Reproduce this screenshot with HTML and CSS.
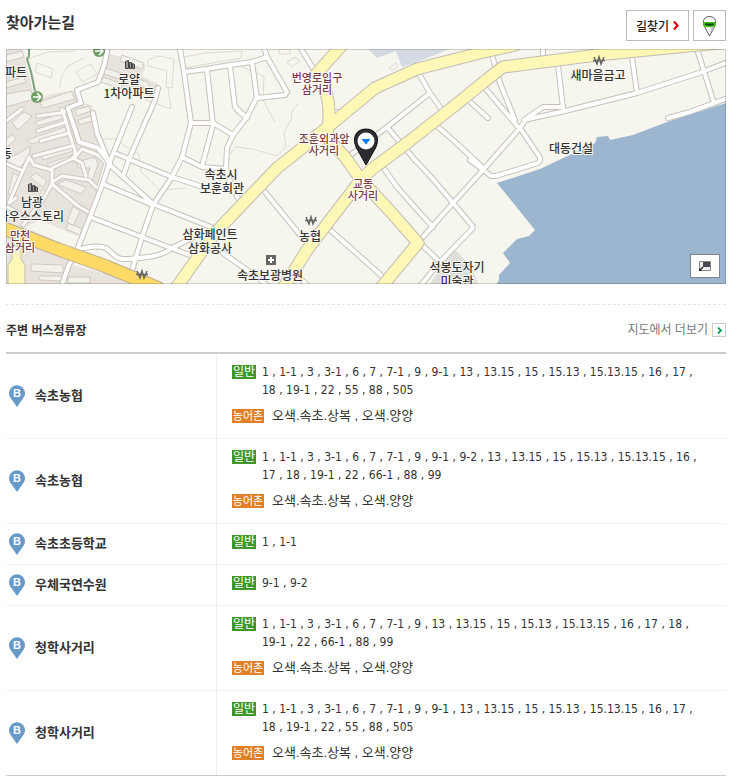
FILE: index.html
```html
<!DOCTYPE html>
<html lang="ko">
<head>
<meta charset="utf-8">
<meta name="viewport" content="width=device-width, initial-scale=1">
<title>찾아가는길</title>
<link rel="stylesheet" href="styles.css">
</head>
<body>
<main>
<section class="directions">
  <header class="directions-head">
    <h2>찾아가는길</h2>
    <div class="tools">
      <a class="tool route" href="#route">길찾기
        <svg width="6" height="9" viewBox="0 0 6 9" aria-hidden="true"><path d="M1 .5 4.5 4.5 1 8.500" fill="none" stroke="#f00000" stroke-width="2.200"/></svg>
      </a>
      <button class="tool street" type="button" aria-label="거리뷰">
        <svg width="15" height="22" viewBox="0 0 15 22" aria-hidden="true">
          <path d="M7.500 21 2 10.500C0 5 3 1.500 7.500 1.500S15 5 13 10.500Z" fill="#fff" stroke="#555" stroke-width="1"/>
          <path d="M8 19 9 12h3Z" fill="#ccc"/>
          <path d="M1.500 7h12v4.500q-6 1.500-12 0Z" fill="#3fc514"/>
          <path d="M3 8.500h9v1.500q-4.500 1.500-9 0Z" fill="#143c10"/>
        </svg>
      </button>
    </div>
  </header>

  <div class="map">
    <svg class="map-canvas" viewBox="6 49 720 235" preserveAspectRatio="xMidYMid slice" role="img" aria-label="약도">
      <defs>
        <g id="streets">
          <path d="M180 49 184 72 191 123 182 157 172 177 153 205 142 237 130 277"/>
          <path d="M184 72 207 69 230 65 252 62 267 57 287 92 285 95 257 98 252 62M264 47 267 57"/>
          <path d="M257 97 247 117 233 135 227 148 226 168 232 188 241 203M238 111 247 118 235 107 230 66"/>
          <path d="M207 70 213 125 202 166M191 123H213L233 135M182 157 202 167 226 169"/>
          <path d="M117 154 143 165 172 177 203 187"/>
          <path d="M132 107 109 164 103 183 90 217 77 250 68 267 62 285M158 88 155 100 130 157 123 176"/>
          <path d="M93 113 97 133 110 165 153 204 216 229M103 184 153 205M90 217 142 237 195 257"/>
          <path d="M77 250Q96 244 106 248C113 253 116 260 126 259 139 258 160 258 172 248L192 238"/>
          <path d="M108 47 104 66 98 82 77 90 81 103 68 108 79 142 98 148 110 164"/>
          <path d="M265 192 300 235M223 253 257 277 269 287M294 272 308 286M328 228 383 277"/>
          <path d="M385 170 397 187 420 213 433 227M415 160 432 178 453 203 470 223Q475 227 471 230L440 262 421 285"/>
          <path d="M387 127 415 160M348 157 387 127 430 93M418 72 430 93 442 110M300 47 317 75M333 112H342"/>
          <path d="M438 127 453 140 482 167M470 160 491 176H496L538 163Q542 160 539 156L520 128 483 170 453 203 423 237M423 246 440 262"/>
          <path d="M485 88 518 127M492 55 500 83 515 120M468 100 488 118M558 65 563 108"/>
          <path d="M520 128 527 118 543 107H563M524 120 565 111 637 93 702 72 728 62"/>
          <path d="M632 57 637 93M697 49 713 100M668 118 690 112 728 98M543 49V54"/>
        </g>
        <g id="lanes">
          <path d="M62 109 73 145Q78 155 72 159L52 168M69 133 41 141M72 146 34 156M66 122 38 131M68 110 60 113 38 116"/>
          <path d="M75 157 82 149 98 155 107 164M73 158 82 163 86 176M105 166 98 190M16 198 9 203 29 157 34 165 52 170 52 184 78 206 90 213M52 182 62 176 89 180 96 187M52 184 42 201 23 225M29 158 23 171 7 164M7 207 24 216M6 121 22 109"/>
        </g>
        <g id="avenues">
          <path d="M730 42 657 49 597 55 503 67 490 77 453 107 407 143 372 169 360 181 330 220 307 250 284 287"/>
          <path d="M515 45 480 53 417 69 375 88 335 121 306 145 277 168 215 233 176 288"/>
          <path d="M345 42 317 73Q329 92 329 112T326 137L345 157 362 181 390 211 418 243 379 290"/>
        </g>
        <path id="highway" d="M0 227 60 250 105 266 158 288"/>
      </defs>
      <rect x="6" y="49" width="720" height="235" fill="#f6f5ee"/>
      <path d="M6 49H22L34 90 43 97 75 87 82 103 92 105 98 150 108 165 77 250 60 285H6Z" fill="#e8e3dd"/>
      <path d="M60 262 110 275 130 285H60Z" fill="#e8e3dd"/>
      <path d="M108 53 146 65 142 76 158 84 151 97 101 82Z" fill="#e8e3dd"/>
      <path d="M23 49H106L98 81 76 90 65 92 34 96Z" fill="#f6f5ee"/>
      <path d="M368 49 377 58 396 51 402 67 417 62 450 49Z" fill="#d4dae4"/>
      <path d="M455 250 471 266 478 284H430L443 264Z" fill="#dde0d8"/>
      <path d="M40 220 80 237 74 249 25 227Z" fill="#f6f5ee"/>
      <g class="outlines">
        <path d="M28 59 48 52 75 51M60 87 61 78 68 66 84 58M158 88 146 100 171 109 168 87M240 66 264 76 263 100 275 122M298 104Q291 108 291 120L284 132 286 147 277 156 252 149 236 147 230 154M98 139 117 139 124 146 139 154 141 172 160 190 187 188"/>
        <path d="M37 63 53 69 51 78 35 72ZM76 72 90 64 97 74 82 82ZM148 60 158 56 174 59 172 88 166 87 167 71 148 66ZM184 57 205 53 242 51 241 58 207 64 185 68ZM279 49H290V54H279ZM287 62 295 57 300 61 291 67ZM389 68 396 63 398 67 392 71Z"/>
      </g>
      <g class="buildings">
        <path d="M6 55 22 51 24 57 6 62ZM6 82 24 77 26 82 6 88ZM6 94 30 90 35 99 6 107ZM12 123 24 112 32 116 18 130ZM6 139 13 134 16 139 6 148ZM40 102 71 91 75 99 43 108ZM35 122 63 113 65 118 38 126ZM27 140 65 127 67 132 32 144ZM41 153 72 144 73 151 43 160ZM47 164 72 155 73 160 50 168Z"/>
        <path d="M75 110 89 106 91 111 77 116ZM78 120 91 116 92 121 79 125ZM105 68 148 82 150 89 104 74ZM122 55 144 63 142 69 120 61ZM103 77 123 84 121 89 101 82ZM76 162 95 157 98 164 91 184 86 181 90 168 79 168ZM30 177 36 173 47 181 43 187ZM57 184 66 180 86 187 81 194ZM73 206 80 211 73 226 67 222ZM43 189 48 192 39 207 34 204ZM68 223 82 229 80 235 66 229ZM6 160 21 152 31 146 28 158 19 169ZM13 173 22 178 13 198 8 194Z"/>
        <path d="M31 264 63 265V273L31 271ZM39 276 62 276V281L39 280ZM68 277 90 277V283H68Z"/>
      </g>
      <use href="#lanes" class="lane-edge"/><use href="#lanes" class="lane"/>
      <use href="#streets" class="street-edge"/><use href="#streets" class="street-fill"/>
      <use href="#avenues" class="avenue-edge"/><use href="#avenues" class="avenue"/>
      <path d="M12 246H21V259L25 265V286H8V265L12 259Z" fill="#fdf8b5" stroke="#c3bdb4"/>
      <use href="#highway" class="highway-edge"/><use href="#highway" class="highway"/>
      <path d="M726 103 667 122 633 135 610 140 608 136 597 137 595 143 540 169 497 183 535 230 529 236 517 239 503 253 510 263 499 275 499 280 496 285H726Z" fill="#9db6cf"/>
      <path d="M29 49V56L27 59 31 72 35 91" fill="none" stroke="#7da27d" stroke-width="2"/>
      <g fill="#739c68"><circle cx="37" cy="97" r="6"/><circle cx="99" cy="51" r="6"/></g>
      <path d="M33 97H40M37 93 41 97 37 101M95 51H102M99 47 103 51 99 55" fill="none" stroke="#fff" stroke-width="1.500"/>

      <g fill="#999" stroke="#444">
        <path d="M125.500 68.500V61.500L128.500 60.500V68.500ZM129.500 68.500V62.500H131.500V68.500ZM132.500 68.500V63.500L134.500 64.500V68.500Z"/>
        <path d="M28.500 191.500V184.500L31.500 183.500V191.500ZM32.500 191.500V185.500H34.500V191.500ZM35.500 191.500V186.500L37.500 187.500V191.500Z"/>
      </g>
      <g fill="none" stroke="#666" stroke-width="1.500">
        <path d="M594 57 597 64 599 57 601 64 604 57M593 60.500H605"/>
        <path d="M306 217 309 224 311 217 313 224 316 217M305 220.500H317"/>
        <path d="M137 271 140 278 142 271 144 278 147 271M136 274.500H148"/>
      </g>
      <rect x="266" y="255" width="10" height="10" fill="#666"/>
      <path d="M271 257V263M268 260H274" stroke="#fff" stroke-width="2"/>

      <g class="place">
        <text x="27" y="77" class="flush">파트</text>
        <text x="12" y="158" class="flush">동</text>
        <text x="129" y="84">로얄</text><text x="129" y="98">1차아파트</text>
        <text x="32" y="207">남광</text>
        <text x="64" y="221" class="flush">하우스스토리</text>
        <text x="221" y="179">속초시</text><text x="222" y="193">보훈회관</text>
        <text x="210" y="239">삼화페인트</text><text x="210" y="253">삼화공사</text>
        <text x="310" y="241">농협</text>
        <text x="270" y="280">속초보광병원</text>
        <text x="598" y="80">새마을금고</text>
        <text x="571" y="153">대동건설</text>
        <text x="457" y="272">석봉도자기</text><text x="457" y="286">미술관</text>
      </g>
      <g class="crossing">
        <text x="317" y="82">번영로입구</text><text x="317" y="94">삼거리</text>
        <text x="324" y="143">조훈외과앞</text><text x="324" y="155">사거리</text>
        <text x="363" y="188">교동</text><text x="363" y="200">사거리</text>
        <text x="20" y="240">만천</text><text x="20" y="252">삼거리</text>
      </g>
      <path d="M366 165 356.500 148C352 139 355 129 366 129S380 139 375.500 148Z" fill="#2b2d30" stroke="#111"/>
      <circle cx="366" cy="141" r="8.500" fill="#fff"/>
      <path d="M361.500 139H370.500L366 144.500Z" fill="#087cf5"/>
    </svg>
    <button class="minimap" type="button" aria-label="작은 지도 열기">
      <svg width="12" height="10" viewBox="0 0 12 10" aria-hidden="true"><path d="M.5.5H11.500V9.500H.5Z" fill="#eee" stroke="#888"/><path d="M4 1H11V6H4Z" fill="#44484f"/><path d="M0 10V7L1 8 3.500 5.500 4.500 6.500 2 9 3 10Z" fill="#222"/></svg>
    </button>
  </div>
</section>

<section class="stops">
  <header class="stops-head">
    <h3>주변 버스정류장</h3>
    <a class="more" href="#map">지도에서 더보기
      <span class="more-box"><svg width="5" height="7" viewBox="0 0 5 7" aria-hidden="true"><path d="M1 .5 4 3.500 1 6.500" fill="none" stroke="#009f4b" stroke-width="1.800"/></svg></span>
    </a>
  </header>
  <svg class="symbols" aria-hidden="true"><symbol id="stop-pin" viewBox="0 0 16 22"><path d="M8 22 2 13.500A8 8 0 1 1 14 13.500Z" fill="#6799c9"/><text x="8" y="12" class="pin-letter">B</text></symbol></svg>
  <table>
    <tbody>
      <tr>
        <th scope="row"><span class="stop"><svg class="pin"><use href="#stop-pin"/></svg>속초농협</span></th>
        <td>
          <div class="line"><span class="badge">일반</span><span class="routes">1&nbsp;, 1-1&nbsp;, 3&nbsp;, 3-1&nbsp;, 6&nbsp;, 7&nbsp;, 7-1&nbsp;, 9&nbsp;, 9-1&nbsp;, 13&nbsp;, 13.15&nbsp;, 15&nbsp;, 15.13&nbsp;, 15.13.15&nbsp;, 16&nbsp;, 17&nbsp;, 18&nbsp;, 19-1&nbsp;, 22&nbsp;, 55&nbsp;, 88&nbsp;, 505</span></div>
          <div class="line rural"><span class="badge">농어촌</span><span>오색.속초.상복 , 오색.양양</span></div>
        </td>
      </tr>
      <tr>
        <th scope="row"><span class="stop"><svg class="pin"><use href="#stop-pin"/></svg>속초농협</span></th>
        <td>
          <div class="line"><span class="badge">일반</span><span class="routes">1&nbsp;, 1-1&nbsp;, 3&nbsp;, 3-1&nbsp;, 6&nbsp;, 7&nbsp;, 7-1&nbsp;, 9&nbsp;, 9-1&nbsp;, 9-2&nbsp;, 13&nbsp;, 13.15&nbsp;, 15&nbsp;, 15.13&nbsp;, 15.13.15&nbsp;, 16&nbsp;, 17&nbsp;, 18&nbsp;, 19-1&nbsp;, 22&nbsp;, 66-1&nbsp;, 88&nbsp;, 99</span></div>
          <div class="line rural"><span class="badge">농어촌</span><span>오색.속초.상복 , 오색.양양</span></div>
        </td>
      </tr>
      <tr>
        <th scope="row"><span class="stop"><svg class="pin"><use href="#stop-pin"/></svg>속초초등학교</span></th>
        <td><div class="line"><span class="badge">일반</span><span class="routes">1&nbsp;, 1-1</span></div></td>
      </tr>
      <tr>
        <th scope="row"><span class="stop"><svg class="pin"><use href="#stop-pin"/></svg>우체국연수원</span></th>
        <td><div class="line"><span class="badge">일반</span><span class="routes">9-1&nbsp;, 9-2</span></div></td>
      </tr>
      <tr>
        <th scope="row"><span class="stop"><svg class="pin"><use href="#stop-pin"/></svg>청학사거리</span></th>
        <td>
          <div class="line"><span class="badge">일반</span><span class="routes">1&nbsp;, 1-1&nbsp;, 3&nbsp;, 3-1&nbsp;, 6&nbsp;, 7&nbsp;, 7-1&nbsp;, 9&nbsp;, 13&nbsp;, 13.15&nbsp;, 15&nbsp;, 15.13&nbsp;, 15.13.15&nbsp;, 16&nbsp;, 17&nbsp;, 18&nbsp;, 19-1&nbsp;, 22&nbsp;, 66-1&nbsp;, 88&nbsp;, 99</span></div>
          <div class="line rural"><span class="badge">농어촌</span><span>오색.속초.상복 , 오색.양양</span></div>
        </td>
      </tr>
      <tr>
        <th scope="row"><span class="stop"><svg class="pin"><use href="#stop-pin"/></svg>청학사거리</span></th>
        <td>
          <div class="line"><span class="badge">일반</span><span class="routes">1&nbsp;, 1-1&nbsp;, 3&nbsp;, 3-1&nbsp;, 6&nbsp;, 7&nbsp;, 7-1&nbsp;, 9&nbsp;, 9-1&nbsp;, 13&nbsp;, 13.15&nbsp;, 15&nbsp;, 15.13&nbsp;, 15.13.15&nbsp;, 16&nbsp;, 17&nbsp;, 18&nbsp;, 19-1&nbsp;, 22&nbsp;, 55&nbsp;, 88&nbsp;, 505</span></div>
          <div class="line rural"><span class="badge">농어촌</span><span>오색.속초.상복 , 오색.양양</span></div>
        </td>
      </tr>
    </tbody>
  </table>
</section>
</main>
</body>
</html>
```
FILE: styles.css
```css
* { box-sizing: border-box; }
body {
  margin: 0;
  background: #fff;
  color: #333;
  font: 12px/18px "Liberation Sans", "Noto Sans CJK KR", sans-serif;
}
main { padding: 10px 11px 5px 6px; }
h2, h3 { margin: 0; color: #333; font-family: "Noto Sans CJK KR", sans-serif; font-weight: 700; }
h2 { font-size: 15px; line-height: 24px; }
h3 { font-size: 12px; }
a { color: inherit; text-decoration: none; }

.directions { padding-bottom: 20px; border-bottom: 1px dashed #e5e5e5; }
.directions-head { display: flex; justify-content: space-between; margin-bottom: 8px; }
.tools { display: flex; gap: 4px; }
.tool {
  display: flex;
  align-items: center;
  justify-content: center;
  height: 31px;
  padding: 0;
  border: 1px solid #bbb;
  background: #fff;
}
.route { gap: 4px; width: 63px; color: #222; font-family: "Noto Sans CJK KR", sans-serif; font-weight: 500; }
.street { width: 33px; }

.map { position: relative; height: 235px; overflow: hidden; }
.map::after {
  content: "";
  position: absolute;
  inset: 0;
  border: 1px solid rgba(0, 0, 0, 0.16);
  pointer-events: none;
}
.map-canvas { display: block; width: 100%; height: 100%; }
.map-canvas text {
  font-family: "Noto Sans CJK KR", sans-serif;
  font-weight: 500;
  stroke-width: 2px;
  stroke-linejoin: round;
  paint-order: stroke;
}
.place { font-size: 12px; fill: #333; stroke: #f8f7f2; text-anchor: middle; }
.place .flush { text-anchor: end; }
.crossing { font-size: 11px; fill: #7a3b40; stroke: #fff; text-anchor: middle; }
.outlines { fill: none; stroke: #dedbd1; }
.buildings { fill: #f3f1eb; stroke: #d0cac2; }
.lane-edge, .lane, .street-edge, .street-fill, .avenue-edge, .avenue, .highway-edge, .highway {
  fill: none;
  stroke-linecap: round;
  stroke-linejoin: round;
}
.lane-edge { stroke: #cdc7bf; stroke-width: 5px; }
.lane { stroke: #fcfbf9; stroke-width: 3px; }
.street-edge { stroke: #c6c1bb; stroke-width: 6px; }
.street-fill { stroke: #fff; stroke-width: 4px; }
.avenue-edge { stroke: #c3bdb4; stroke-width: 13px; }
.avenue { stroke: #fdf8b5; stroke-width: 11px; }
.highway-edge { stroke: #b9ad90; stroke-width: 14px; }
.highway { stroke: #ffda66; stroke-width: 12px; }
.minimap {
  position: absolute;
  right: 6px;
  bottom: 6px;
  display: flex;
  align-items: center;
  justify-content: center;
  width: 30px;
  height: 24px;
  padding: 0;
  border: 1px solid #7d8591;
  background: #fff;
}

.stops-head {
  display: flex;
  align-items: center;
  justify-content: space-between;
  padding: 16px 0 13px;
  border-bottom: 2px solid #ccc;
}
.more { display: flex; align-items: center; gap: 4px; color: #777; }
.more-box {
  display: flex;
  align-items: center;
  justify-content: center;
  width: 14px;
  height: 14px;
  border: 1px solid #ccc;
}
.symbols { position: absolute; width: 0; height: 0; }
.pin-letter { fill: #fff; font: 700 11px "Liberation Sans", sans-serif; text-anchor: middle; }

table { width: 100%; border-collapse: separate; border-spacing: 0; border-bottom: 1px solid #ccc; }
th, td { border-bottom: 1px solid #f2f2f2; }
tr:last-child > * { border-bottom: 0; }
th { width: 211px; padding: 0 3px; border-right: 1px solid #f0f0f0; text-align: left; vertical-align: middle; }
td { padding: 9px 24px 13px 15px; vertical-align: top; }
.stop { display: flex; align-items: center; gap: 10px; font-size: 13px; }
.pin { width: 16px; height: 22px; }
.line { display: flex; align-items: flex-start; gap: 6px; }
.routes { font-family: "DejaVu Sans Condensed", "Liberation Sans", sans-serif; }
.rural { gap: 8px; margin-top: 8px; font-size: 13px; }
.badge {
  flex: none;
  width: 24px;
  height: 14px;
  margin-top: 2px;
  background: #40962a;
  color: #fff;
  font-size: 12px;
  line-height: 14px;
  text-align: center;
}
.rural .badge { width: 32px; background: #e08029; font-size: 11px; }
```
